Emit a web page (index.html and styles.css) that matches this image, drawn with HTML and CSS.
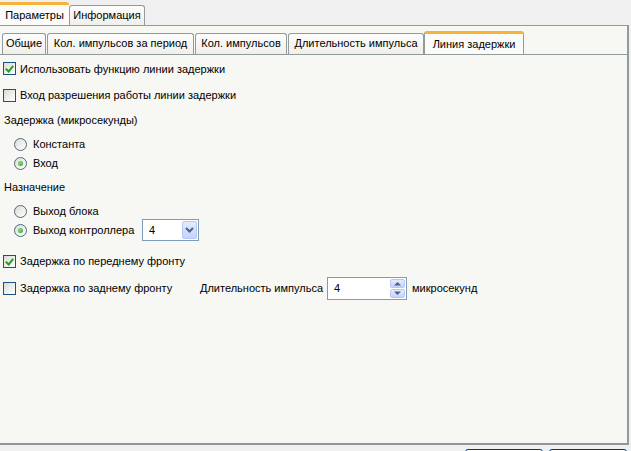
FILE: index.html
```html
<!DOCTYPE html>
<html lang="ru">
<head>
    <meta charset="UTF-8">
    <title>Линия задержки</title>
    <link rel="stylesheet" href="styles.css">
</head>
<body>
    <div class="tabs outer-tabs">
        <div class="tab tab-active tab-params">Параметры</div>
        <div class="tab tab-info">Информация</div>
    </div>

    <div class="outer-panel">
        <div class="tabs inner-tabs">
            <div class="tab t-common">Общие</div>
            <div class="tab t-count-period">Кол. импульсов за период</div>
            <div class="tab t-count">Кол. импульсов</div>
            <div class="tab t-length">Длительность импульса</div>
            <div class="tab tab-active t-delay">Линия задержки</div>
        </div>

        <div class="inner-panel">
            <div class="row row-1">
                <span class="check checked"></span>
                <span>Использовать функцию линии задержки</span>
            </div>
            <div class="row row-2">
                <span class="check"></span>
                <span>Вход разрешения работы линии задержки</span>
            </div>
            <div class="row caption cap-1">Задержка (микросекунды)</div>
            <div class="row radio-row r-const">
                <span class="radio"></span>
                <span>Константа</span>
            </div>
            <div class="row radio-row r-input">
                <span class="radio checked"></span>
                <span>Вход</span>
            </div>
            <div class="row caption cap-2">Назначение</div>
            <div class="row radio-row r-block">
                <span class="radio"></span>
                <span>Выход блока</span>
            </div>
            <div class="row radio-row r-ctrl">
                <span class="radio checked"></span>
                <span class="radio-label">Выход контроллера</span>
                <div class="combo">
                    <span class="field-value">4</span>
                    <span class="combo-btn">
                        <svg width="9" height="6" viewBox="0 0 9 6"><path d="M1 1 L4.5 4.5 L8 1" fill="none" stroke="#4d6185" stroke-width="2"/></svg>
                    </span>
                </div>
            </div>
            <div class="row row-front">
                <span class="check checked"></span>
                <span>Задержка по переднему фронту</span>
            </div>
            <div class="row row-back">
                <span class="check"></span>
                <span class="back-label">Задержка по заднему фронту</span>
                <span class="len-label">Длительность импульса</span>
                <div class="spin">
                    <span class="field-value">4</span>
                    <span class="spin-btns">
                        <span class="spin-btn">
                            <svg width="9" height="5" viewBox="0 0 9 5"><path d="M1 4.5 L4.5 1 L8 4.5 Z" fill="#4d6185"/></svg>
                        </span>
                        <span class="spin-btn">
                            <svg width="9" height="5" viewBox="0 0 9 5"><path d="M1 0.5 L4.5 4 L8 0.5 Z" fill="#4d6185"/></svg>
                        </span>
                    </span>
                </div>
                <span class="unit">микросекунд</span>
            </div>
        </div>
    </div>

    <div class="footer">
        <div class="btn"></div>
        <div class="btn"></div>
    </div>
</body>
</html>
```

FILE: styles.css
```css
/* Reset */
* {
    margin: 0;
    padding: 0;
    box-sizing: border-box;
}

html, body {
    height: 100%;
    overflow: hidden;
}

body {
    background-color: #f0f0f0;
    font-family: "Liberation Sans", Arial, sans-serif;
    font-size: 11px;
    color: #000;
}

/* Tabs */
.tabs {
    display: flex;
    align-items: flex-end;
}

.outer-tabs {
    height: 25px;
}

.tab {
    height: 20px;
    padding-top: 3px;
    text-align: center;
    white-space: nowrap;
    border: 1px solid #919b9c;
    border-bottom: none;
    border-radius: 3px 3px 0 0;
    background: linear-gradient(#fdfdfd, #f0efea);
    flex-shrink: 0;
}

.tab-active {
    height: 23px;
    padding-top: 4px;
    border-top: 3px solid #f5b33a;
    background: #fbfbf9;
}

.tab-params {
    width: 69px;
    border-left: none;
    border-top-left-radius: 0;
    border-right: none;
}

.tab-info {
    width: 76px;
}

/* Outer panel */
.outer-panel {
    width: 629px;
    height: 420px;
    background-color: #f7f7f3;
    border-top: 1px solid #919b9c;
    border-right: 2px solid #919b9c;
    border-bottom: 2px solid #8e9696;
    display: flex;
    flex-direction: column;
}

.inner-tabs {
    height: 28px;
    padding-left: 2px;
}

.inner-tabs .tab {
    height: 21px;
    margin-right: 2px;
}

.inner-tabs .tab-active {
    height: 23px;
    margin-right: 0;
    margin-left: -2px;
    border-top-width: 3px;
}

.t-common { width: 44px; }
.t-count-period { width: 147px; }
.t-count { width: 92px; }
.t-length { width: 136px; }
.t-delay { width: 100px; }

.inner-tabs .t-common,
.inner-tabs .t-count-period,
.inner-tabs .t-count {
    margin-right: 1px;
}

.inner-panel {
    flex: 1;
    border-top: 1px solid #919b9c;
    padding-left: 3px;
}

/* Rows */
.row {
    display: flex;
    align-items: center;
    white-space: nowrap;
}

.row span {
    flex-shrink: 0;
}

.row-1 { height: 27px; }
.row-2 { height: 26px; }
.cap-1 { height: 24px; padding-left: 1px; }
.r-const { height: 24px; }
.r-input { height: 14px; }
.cap-2 { height: 34px; padding-left: 1px; }
.r-block { height: 14px; }
.r-ctrl { height: 24px; }
.row-front { height: 38px; }
.row-back { height: 16px; }

.radio-row {
    padding-left: 11px;
}

/* Checkbox */
.check {
    width: 13px;
    height: 13px;
    margin-right: 4px;
    border: 1px solid #1c5180;
    background: linear-gradient(135deg, #dcdcd6, #ffffff);
    position: relative;
}

.check.checked::after {
    content: "";
    position: absolute;
    left: 2px;
    top: 0px;
    width: 3px;
    height: 6px;
    border-right: 2px solid #21a121;
    border-bottom: 2px solid #21a121;
    transform: translate(1px, 1px) rotate(40deg);
}

/* Radio */
.radio {
    width: 13px;
    height: 13px;
    margin-right: 6px;
    border: 1px solid #4f6a86;
    border-radius: 50%;
    background: linear-gradient(135deg, #dcdcd6, #ffffff);
    position: relative;
}

.radio.checked::after {
    content: "";
    position: absolute;
    left: 3px;
    top: 3px;
    width: 5px;
    height: 5px;
    border-radius: 50%;
    background: radial-gradient(circle at 40% 40%, #8ce08c, #21a121);
}

.radio-label {
    width: 109px;
}

/* Combo box */
.combo, .spin {
    display: flex;
    align-items: stretch;
    background-color: #fff;
    border: 1px solid #7f9db9;
    flex-shrink: 0;
}

.combo {
    width: 57px;
    height: 22px;
}

.field-value {
    flex: 1;
    padding-left: 6px;
    display: flex;
    align-items: center;
}

.combo-btn {
    width: 15px;
    margin: 1px;
    border: 1px solid #b7c8f3;
    border-radius: 2px;
    background: linear-gradient(#e4ecfd, #c2d3fc);
    display: flex;
    align-items: center;
    justify-content: center;
}

/* Spin box */
.back-label {
    width: 180px;
}

.len-label {
    width: 127px;
}

.spin {
    width: 80px;
    height: 23px;
}

.spin-btns {
    width: 15px;
    margin: 1px;
    display: flex;
    flex-direction: column;
    gap: 1px;
}

.spin-btn {
    flex: 1;
    border: 1px solid #b7c8f3;
    border-radius: 2px;
    background: linear-gradient(#e4ecfd, #c2d3fc);
    display: flex;
    align-items: center;
    justify-content: center;
}

.unit {
    margin-left: 5px;
}

/* Bottom buttons */
.footer {
    display: flex;
    justify-content: flex-end;
    gap: 6px;
    padding-top: 4px;
    padding-right: 4px;
}

.btn {
    width: 78px;
    height: 23px;
    border: 1px solid #003c74;
    border-radius: 3px;
    background: linear-gradient(#ffffff, #ecebe6);
}
```
